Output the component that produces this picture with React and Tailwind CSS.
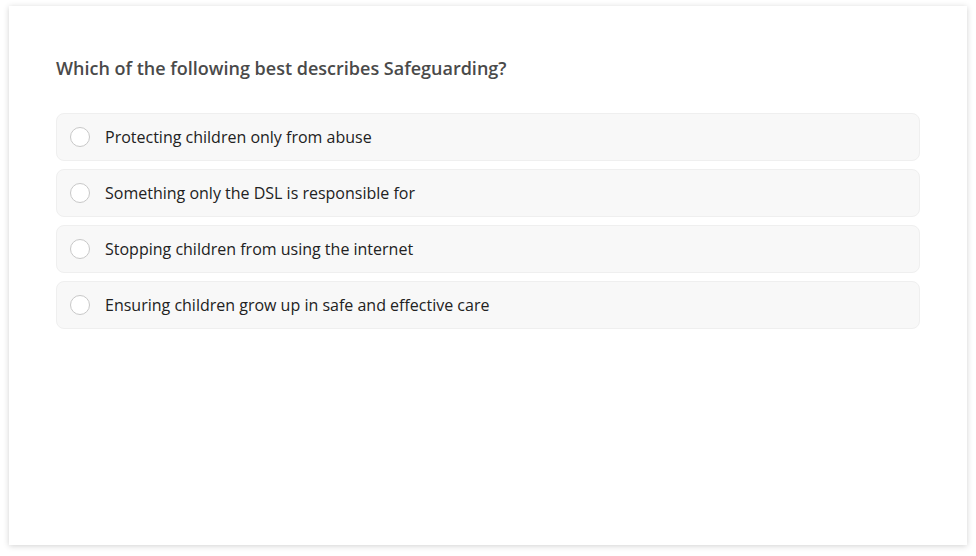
const options = [
    "Protecting children only from abuse",
    "Something only the DSL is responsible for",
    "Stopping children from using the internet",
    "Ensuring children grow up in safe and effective care",
];

export default function App() {
    return (
        <div
            className="w-[976px] h-[556px] bg-white pt-[6px] px-[9px]"
            style={{ fontFamily: '"Open Sans", sans-serif' }}
        >
            <div className="h-[539px] bg-white shadow-[0_1px_6px_rgba(0,0,0,0.18)] px-[47px] pt-[50px]">
                <h2 className="text-[18px] font-semibold text-[#4a4a4a] leading-[24px]">
                    Which of the following best describes Safeguarding?
                </h2>
                <div className="mt-[33px] flex flex-col gap-[8px]">
                    {options.map((opt) => (
                        <label
                            key={opt}
                            className="h-[48px] flex items-center bg-[#f8f8f8] border border-[#efefef] rounded-[8px] pl-[13px] cursor-pointer"
                        >
                            <span className="w-[20px] h-[20px] rounded-full border border-[#c8c8c8] bg-white shrink-0"></span>
                            <span className="ml-[15px] text-[16px] text-[#222]">
                                {opt}
                            </span>
                        </label>
                    ))}
                </div>
            </div>
        </div>
    );
}
